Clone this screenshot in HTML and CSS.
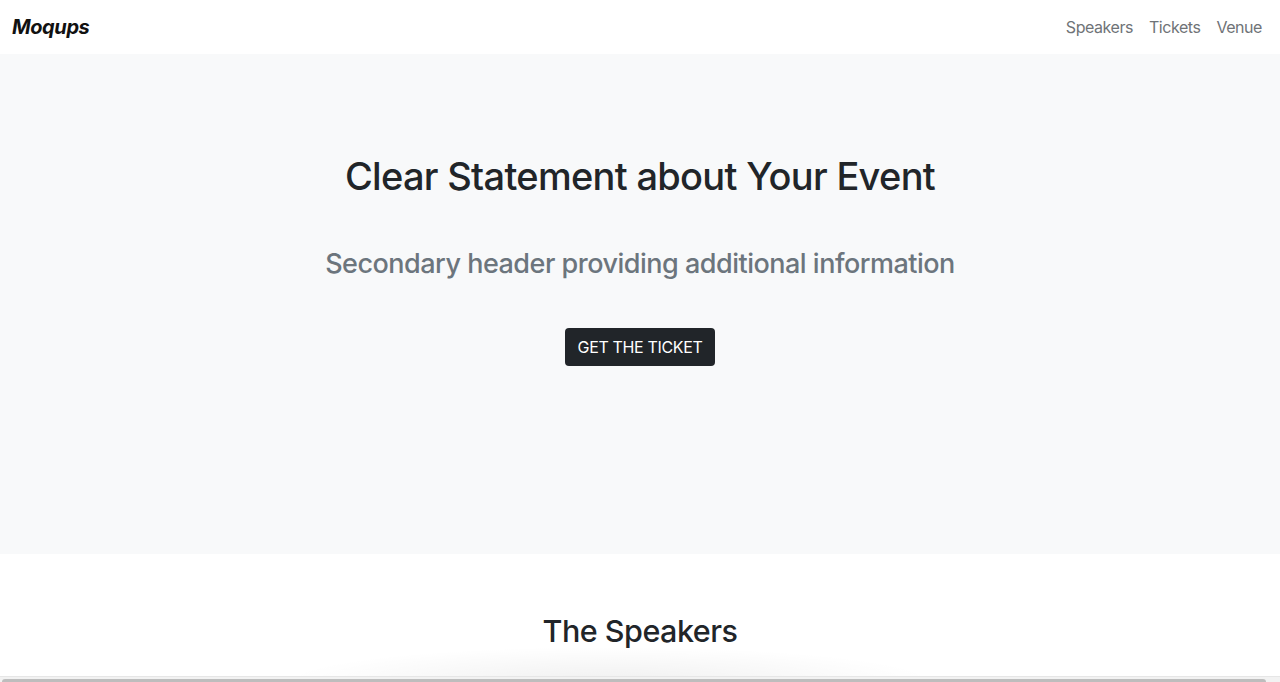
FILE: index.html
```html
<!DOCTYPE html>
<html lang="en">
<head>
<meta charset="utf-8">
<title>Moqups Event</title>
<link rel="stylesheet" href="styles.css">
</head>
<body>
<header class="navbar">
  <a class="brand" href="#">Moqups</a>
  <nav class="nav">
    <a class="nav-link" href="#">Speakers</a>
    <a class="nav-link" href="#">Tickets</a>
    <a class="nav-link" href="#">Venue</a>
  </nav>
</header>
<section class="hero">
  <h1 class="hero-title">Clear Statement about Your Event</h1>
  <p class="hero-sub">Secondary header providing additional information</p>
  <a class="btn" href="#">GET THE TICKET</a>
</section>
<section class="speakers">
  <h2 class="speakers-title">The Speakers</h2>
  <div class="scroller">
    <div class="scroller-glow"></div>
    <div class="scroller-track"><div class="scroller-thumb"></div></div>
  </div>
</section>
</body>
</html>
```
FILE: styles.css
```css
* { box-sizing: border-box; }
html, body { margin: 0; padding: 0; }
body {
  font-family: Inter, "Noto Sans", "Liberation Sans", sans-serif;
  color: #212529;
  background: #fff;
  overflow: hidden;
}
a { text-decoration: none; }

.navbar {
  height: 54px;
  display: flex;
  align-items: center;
  justify-content: space-between;
  padding: 0 10px 0 12px;
  background: #fff;
}
.brand {
  font-size: 20px;
  font-weight: 700;
  font-style: italic;
  color: #111;
  letter-spacing: -0.4px;
}
.nav { display: flex; margin-top: -1px; }
.nav-link {
  font-size: 16px;
  color: #6f7377;
  padding: 8px 8px;
  letter-spacing: -0.45px;
}

.hero {
  height: 500px;
  background: #f8f9fa;
  display: flex;
  flex-direction: column;
  align-items: center;
  padding-top: 98px;
}
.hero-title {
  margin: 0;
  font-size: 38px;
  font-weight: 500;
  line-height: 48px;
  letter-spacing: -0.7px;
  color: #212529;
}
.hero-sub {
  margin: 44px 0 0;
  font-size: 27px;
  font-weight: 500;
  line-height: 40px;
  letter-spacing: -0.5px;
  color: #6c757d;
}
.btn {
  margin-top: 44px;
  height: 38px;
  width: 150px;
  display: flex;
  align-items: center;
  justify-content: center;
  background: #212529;
  color: #fff;
  border-radius: 4px;
  font-size: 16px;
  letter-spacing: -0.35px;
}

.speakers {
  display: flex;
  flex-direction: column;
  align-items: center;
  padding-top: 57px;
}
.speakers-title {
  margin: 0;
  font-size: 30.5px;
  font-weight: 500;
  line-height: 40px;
  letter-spacing: -0.5px;
  color: #212529;
}
.scroller {
  position: relative;
  width: 100%;
  margin-top: 25px;
}
.scroller-glow {
  position: absolute;
  left: 280px;
  width: 660px;
  top: -30px;
  height: 36px;
  background: radial-gradient(ellipse at 50% 100%, rgba(0,0,0,0.06), rgba(0,0,0,0) 70%);
}
.scroller-track {
  position: relative;
  border-top: 1px solid #e6e6e6;
  background: #f2f2f2;
  padding: 2px 14px 0 2px;
  height: 10px;
}
.scroller-thumb {
  height: 6px;
  background: #bdbdbd;
  border-radius: 3px;
}
```
